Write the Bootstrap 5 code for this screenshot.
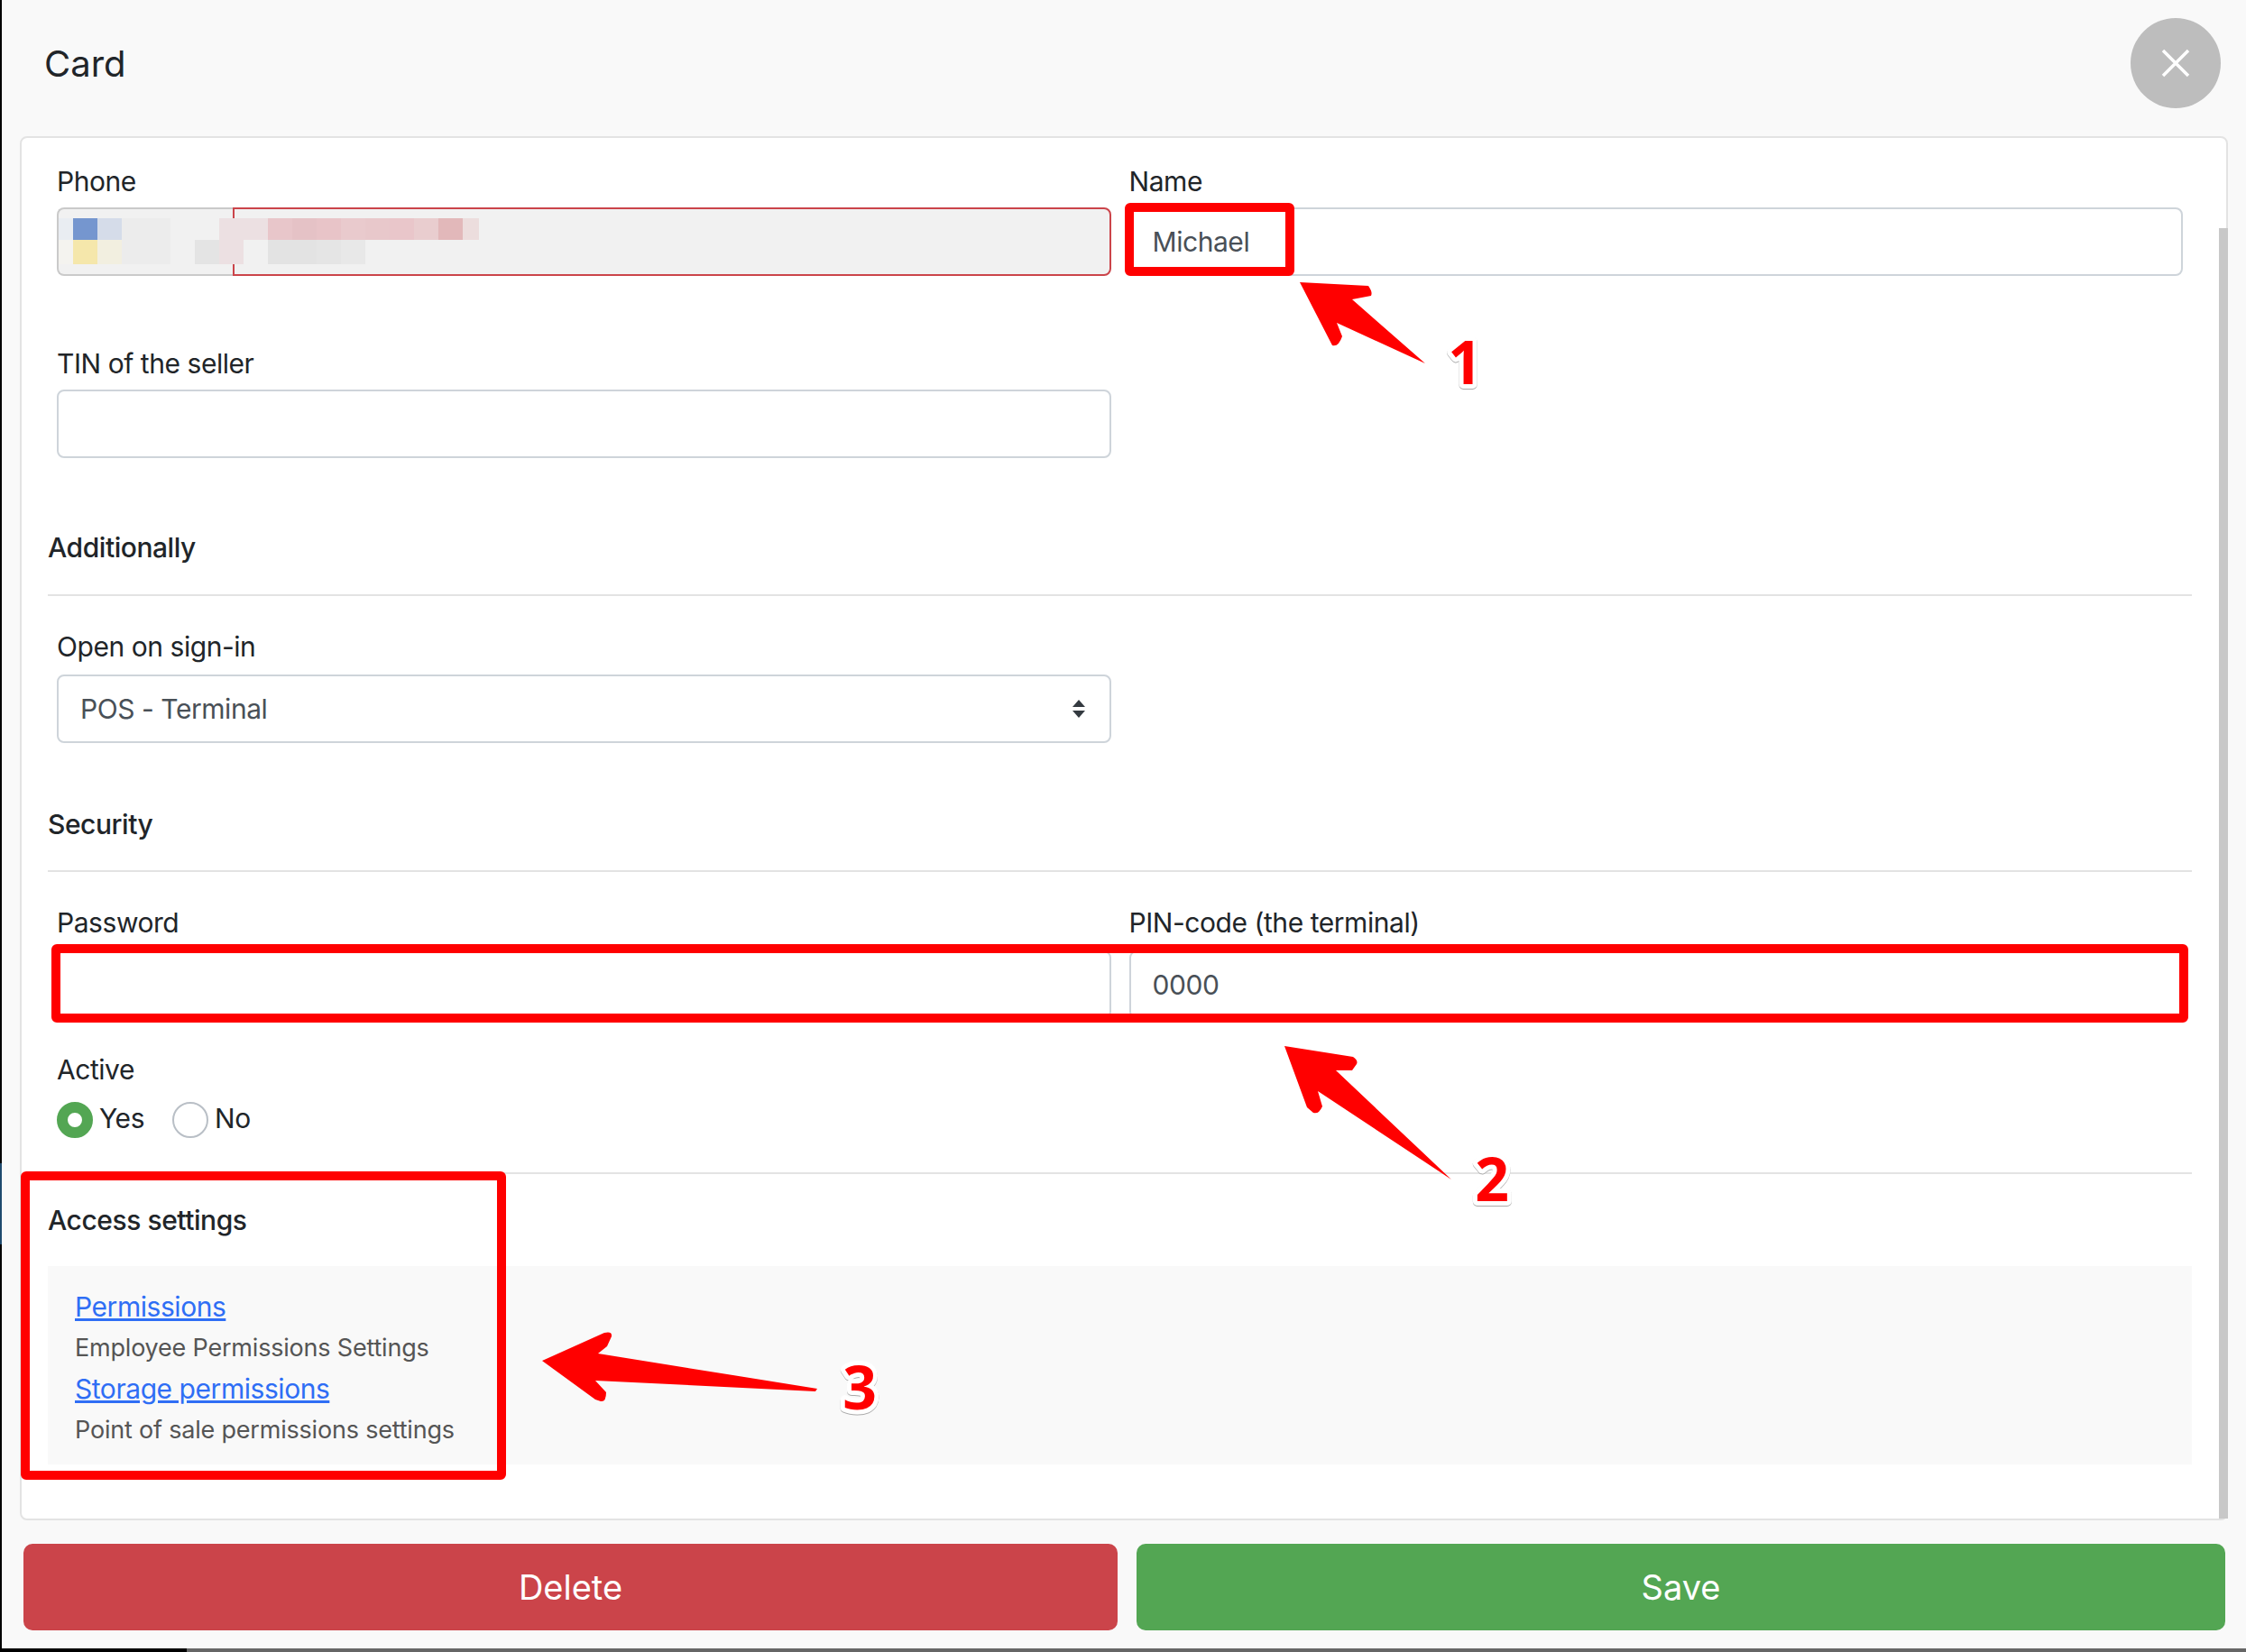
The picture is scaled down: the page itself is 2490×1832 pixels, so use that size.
<!DOCTYPE html>
<html lang="en">
<head>
<meta charset="utf-8">
<title>Card</title>
<link href="https://cdn.jsdelivr.net/npm/bootstrap@5.3.0/dist/css/bootstrap.min.css" rel="stylesheet">
<style>
html,body{margin:0;height:1832px;overflow:hidden}
body{font-family:Inter,"Liberation Sans",sans-serif;font-size:30px;line-height:45px;letter-spacing:-.45px;color:#212529;background:linear-gradient(90deg,#000 207px,#666 207px);position:relative}
.sheet{margin-left:2px;width:2488px;height:1828px;background:#f9f9f9;display:flex;flex-direction:column}
.edge-blue{position:absolute;left:0;top:1290px;width:2px;height:90px;background:#1f4a6e}
.sheet-head{height:151px;flex:none;padding-left:47px;padding-right:26px;display:flex;justify-content:space-between;align-items:flex-start}
.sheet-title{font-size:40px;line-height:60px;font-weight:400;margin:41px 0 0;color:#212529;letter-spacing:0}
.close-disc{width:100px;height:100px;margin-top:20px;margin-right:2px;border:0;border-radius:50%;background:#bdbdbd;padding:0;display:flex;align-items:center;justify-content:center}
.panel{height:1535px;flex:none;margin:0 20px 0 20px;border:2px solid #e3e3e3;border-radius:8px;background:#fff;padding:26px 38px 0 29px;position:relative;--bs-border-radius:8px}
.scroll-thumb{position:absolute;right:-2px;top:100px;bottom:0;width:10px;background:#c8c8c8}
.row{--bs-gutter-x:20px;--bs-gutter-y:0;margin-left:0;margin-right:0}
.fld-label{display:block;margin:0 0 6px;font-size:30px;line-height:45px}
.form-control,.form-select{height:76px;font-size:30px;line-height:45px;letter-spacing:-.45px;padding:14px 24px;border:2px solid #ced4da;border-radius:8px;color:#495057;font-family:inherit}
.form-select{background-image:url("data:image/svg+xml,%3csvg xmlns='http://www.w3.org/2000/svg' viewBox='0 0 16 20'%3e%3cpath fill='%23343a40' d='M8 0l7 8H1zM8 20l-7-8h14z'/%3e%3c/svg%3e");background-size:16px 20px;background-position:right 26px center}
.after-phone{margin-bottom:75px}
.phone-box{position:relative;display:flex;height:76px}
.phone-code{width:195px;flex:none;background:#f1f1f1;border:2px solid #cacaca;border-right:0;border-radius:8px 0 0 8px}
.phone-num{flex:1;background:#f1f1f1;border:2px solid #cb444a;border-radius:0 8px 8px 0}
.phone-blur{position:absolute;left:0;top:0;pointer-events:none}
.sect-head{font-size:30px;line-height:45px;font-weight:500;margin:0;color:#212529}
.sect-rule{height:2px;margin:0;background:#e3e3e3;border:0;opacity:1}
.gap-77{margin-top:77px}.gap-68{margin-top:68px}.gap-34{margin-top:34px}
.gap-34b{margin-top:34px}.gap-29r{margin-top:29px}.gap-28{margin-top:28px}.gap-36{margin-top:36px}.gap-38{margin-top:38px}.gap-29{margin-top:29px}
.label-wide{margin-bottom:8px}
.radio-line{display:flex;align-items:center;height:40px;padding-left:10px;margin-top:7px}
.radio-item{display:flex;align-items:center;gap:7px;margin-right:31px}
.radio-item .form-check-input{width:40px;height:40px;margin:0;border:2px solid #b9bfc6;flex:none;float:none}
.radio-item .form-check-input:checked{background-color:#fff;border-color:#53a653;background-image:none;border-width:12px}
.radio-item span{position:relative;top:-2px}
.pad-label{padding-left:10px}
.access-block{height:220px;background:#f9f9f9;margin-top:28px;padding:23px 30px 0}
.access-block a{display:block;color:#2f6ef5;line-height:45.3px;font-size:30px}
.access-block p{margin:0;color:#555;line-height:45.3px;font-size:27px;letter-spacing:-.2px}
.foot-row{display:flex;gap:21px;padding:26px 23px 0 24px}
.foot-row .btn{height:96px;font-size:38px;line-height:54px;letter-spacing:0;border:0;border-radius:10px;color:#fff;font-weight:400;font-family:inherit}
.foot-del{flex:0 0 1213px;background:#cb444a}
.foot-save{flex:1;background:#53a653}
.notes{position:absolute;left:0;top:0;pointer-events:none}
.note-num{font-family:"Open Sans",sans-serif;font-weight:700;font-size:66px;letter-spacing:0;fill:#f00;stroke:#fff;stroke-width:10px;paint-order:stroke;stroke-linejoin:round;text-anchor:middle;filter:drop-shadow(0 1px 0 #aaa)}
</style>
</head>
<body>
<div class="edge-blue"></div>
<div class="sheet">
  <div class="sheet-head">
    <h1 class="sheet-title">Card</h1>
    <button class="close-disc" type="button" aria-label="Close">
      <svg width="32" height="32" viewBox="0 0 32 32"><path d="M2 2L30 30M30 2L2 30" stroke="#fff" stroke-width="3.5" fill="none"/></svg>
    </button>
  </div>
  <div class="panel card">
    <div class="scroll-thumb"></div>
    <div class="row after-phone">
      <div class="col-6">
        <label class="fld-label">Phone</label>
        <div class="phone-box">
          <div class="phone-code"></div>
          <div class="phone-num"></div>
          <svg class="phone-blur" width="480" height="76" viewBox="63 230 480 76" shape-rendering="crispEdges">
            <rect x="65" y="242" width="16" height="24" fill="#e9edf2"/><rect x="81" y="242" width="27" height="24" fill="#7596cf"/><rect x="108" y="242" width="27" height="24" fill="#d5dce9"/><rect x="135" y="242" width="54" height="24" fill="#ececec"/>
            <rect x="243" y="242" width="54" height="24" fill="#ece0e2"/><rect x="297" y="242" width="27" height="24" fill="#e8c6ca"/><rect x="324" y="242" width="27" height="24" fill="#e5c2c6"/><rect x="351" y="242" width="27" height="24" fill="#e8c4c8"/><rect x="378" y="242" width="27" height="24" fill="#e9cacd"/><rect x="405" y="242" width="27" height="24" fill="#e8c8cb"/><rect x="432" y="242" width="27" height="24" fill="#e9c6ca"/><rect x="459" y="242" width="27" height="24" fill="#e9cdcf"/><rect x="486" y="242" width="27" height="24" fill="#e2b8ba"/><rect x="513" y="242" width="18" height="24" fill="#ecdddd"/>
            <rect x="65" y="266" width="16" height="27" fill="#f4f3ef"/><rect x="81" y="266" width="27" height="27" fill="#f5e7ab"/><rect x="108" y="266" width="27" height="27" fill="#f2efe0"/><rect x="135" y="266" width="54" height="27" fill="#ececec"/>
            <rect x="216" y="266" width="27" height="27" fill="#e4e4e4"/><rect x="243" y="266" width="27" height="27" fill="#ece0e2"/><rect x="297" y="266" width="54" height="27" fill="#e3e3e3"/><rect x="351" y="266" width="27" height="27" fill="#e5e5e5"/><rect x="378" y="266" width="27" height="27" fill="#e8e8e8"/>
          </svg>
        </div>
      </div>
      <div class="col-6">
        <label class="fld-label">Name</label>
        <input class="form-control" type="text" value="Michael">
      </div>
    </div>
    <div class="row">
      <div class="col-6">
        <label class="fld-label">TIN of the seller</label>
        <input class="form-control" type="text">
      </div>
    </div>
    <h2 class="sect-head gap-77">Additionally</h2>
    <hr class="sect-rule gap-29r">
    <div class="row gap-34">
      <div class="col-6">
        <label class="fld-label label-wide">Open on sign-in</label>
        <select class="form-select"><option>POS - Terminal</option></select>
      </div>
    </div>
    <h2 class="sect-head gap-68">Security</h2>
    <hr class="sect-rule gap-28">
    <div class="row gap-34b">
      <div class="col-6">
        <label class="fld-label label-wide">Password</label>
        <input class="form-control" type="password">
      </div>
      <div class="col-6">
        <label class="fld-label label-wide">PIN-code (the terminal)</label>
        <input class="form-control" type="text" value="0000">
      </div>
    </div>
    <div class="pad-label gap-34">
      <label class="fld-label">Active</label>
    </div>
    <div class="radio-line">
      <label class="radio-item"><input class="form-check-input" type="radio" name="act" checked><span>Yes</span></label>
      <label class="radio-item"><input class="form-check-input" type="radio" name="act"><span>No</span></label>
    </div>
    <hr class="sect-rule gap-38">
    <h2 class="sect-head gap-29">Access settings</h2>
    <div class="access-block">
      <a href="#">Permissions</a>
      <p>Employee Permissions Settings</p>
      <a href="#">Storage permissions</a>
      <p>Point of sale permissions settings</p>
    </div>
  </div>
  <div class="foot-row">
    <button class="btn foot-del" type="button">Delete</button>
    <button class="btn foot-save" type="button">Save</button>
  </div>
</div>
<svg class="notes" width="2490" height="1832" viewBox="0 0 2490 1832">
  <g fill="none" stroke="#f00" stroke-width="10" stroke-linejoin="round">
    <rect x="1252" y="230" width="178" height="71" rx="1"/>
    <rect x="62" y="1052" width="2359" height="77" rx="1"/>
    <rect x="28" y="1304" width="528" height="332" rx="1"/>
  </g>
  <g fill="#f00">
    <path d="M1441 313L1517 317Q1522 324 1520 328L1499 332L1580 403L1482 358L1488 373Q1484 385 1477 383Z"/>
    <path d="M1424 1160L1500 1172Q1506 1176 1504 1180L1499 1187L1481 1187L1609 1308L1461 1210L1466 1227Q1462 1236 1456 1234L1449 1228Z"/>
    <path d="M601 1509L670 1478Q679 1476 678 1482L673 1493L663 1501L906 1540L904 1543L660 1531L672 1544Q672 1555 666 1554L660 1552Z"/>
  </g>
  <text class="note-num" x="1624" y="426">1</text>
  <text class="note-num" x="1654" y="1332">2</text>
  <text class="note-num" x="953" y="1563">3</text>
</svg>
</body>
</html>
